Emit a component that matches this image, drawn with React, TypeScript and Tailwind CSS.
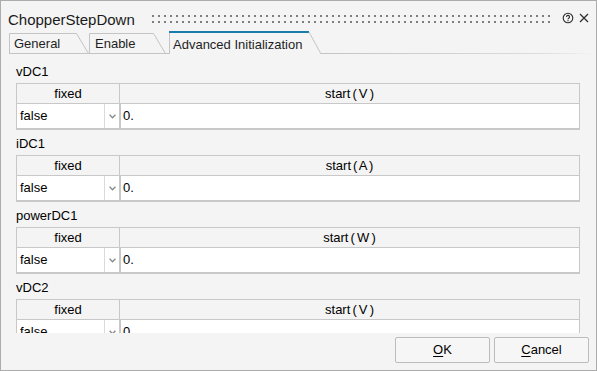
import React from "react";

const rows = [
  { name: "vDC1", unit: "V" },
  { name: "iDC1", unit: "A" },
  { name: "powerDC1", unit: "W" },
  { name: "vDC2", unit: "V" },
];

function InactiveTab({
  label,
  top,
  className,
}: {
  label: string;
  top: number;
  className: string;
}) {
  // top = x where the slanted edge starts, the slant is 12px wide
  return (
    <div className={"relative h-[23px] shrink-0 " + className}>
      <svg className="absolute inset-0" width="80" height="23">
        <path d={`M0.5 23 V2.5 H${top + 0.5} L${top + 12.5} 22.5`} stroke="#c4c4c4" fill="none" />
        <path d="M0 22.5 H80" stroke="#c4c4c4" />
      </svg>
      <div className="relative pt-[5px] text-[13px] leading-[16px] text-[#1e1e1e]">{label}</div>
    </div>
  );
}

function ParamTable({ unit }: { unit: string }) {
  return (
    <div className="mt-[2px] mb-[5px] w-[564px] border border-[#c8c8c8] text-[13px] text-black">
      <div className="flex h-[20px] border-b border-[#c8c8c8] leading-[19px]">
        <div className="w-[103px] border-r border-[#c8c8c8] text-center">fixed</div>
        <div className="flex-1 text-center [word-spacing:-1.5px]">start ( {unit} )</div>
      </div>
      <div className="flex h-[25px] border-b border-[#c8c8c8] leading-[24px]">
        <div className="flex w-[104px] border-r-2 border-[#c8c8c8] bg-white">
          <div className="flex-1 pl-[3px]">false</div>
          <div className="flex w-[15px] items-center justify-center border-l border-[#dadada]">
            <svg width="7" height="5" viewBox="0 0 7 5">
              <path d="M0.6 0.8 L3.5 3.8 L6.4 0.8" stroke="#8c8c8c" strokeWidth="1.4" fill="none" />
            </svg>
          </div>
        </div>
        <div className="flex-1 bg-white pl-[2px]">0.</div>
      </div>
    </div>
  );
}

export default function App() {
  return (
    <div
      className="flex h-[371px] w-[597px] flex-col overflow-hidden border border-[#acacac] bg-[#f4f4f4] text-black"
      style={{ fontFamily: '"Liberation Sans", Arial, sans-serif' }}
    >
      {/* title bar */}
      <div className="flex h-[30px] shrink-0 items-start pl-[7px] pt-[9px]">
        <span className="text-[15px] leading-[20px] text-[#1a1a1a]">ChopperStepDown</span>
        <div className="ml-[15px] mt-[3px] h-[12px] w-[404px] bg-[radial-gradient(circle,#7e7e7e_1.1px,transparent_1.5px)] bg-[length:6px_6px]" />
        <svg className="ml-[8px] mt-[2px]" width="12" height="12" viewBox="0 0 12 12">
          <circle cx="6" cy="6" r="4.8" stroke="#2a2a2a" strokeWidth="1.1" fill="none" />
          <path d="M4.5 4.9 a1.5 1.5 0 1 1 2.2 1.3 c-0.5 0.3 -0.7 0.6 -0.7 1.1" stroke="#2a2a2a" strokeWidth="1.1" fill="none" />
          <circle cx="6" cy="8.7" r="0.65" fill="#2a2a2a" />
        </svg>
        <svg className="ml-[5px] mt-[3px]" width="10" height="10" viewBox="0 0 10 10">
          <path d="M1 1 L9 9 M9 1 L1 9" stroke="#2a2a2a" strokeWidth="1.2" />
        </svg>
      </div>

      {/* tabs */}
      <div className="flex h-[23px] shrink-0 pl-[8px]">
        <InactiveTab label="General" top={67} className="w-[80px] pl-[5px]" />
        <InactiveTab label="Enable" top={64} className="w-[80px] pl-[6px]" />
        <div className="relative h-[23px] w-[152px] shrink-0 pl-[4px]">
          <svg className="absolute inset-0" width="152" height="23">
            <path d="M0.5 23 V1" stroke="#c4c4c4" fill="none" />
            <rect x="0" y="0" width="140" height="2" fill="#1a7cac" />
            <path d="M140 1 L152 23" stroke="#c4c4c4" fill="none" />
          </svg>
          <div className="relative pt-[6px] text-[13px] leading-[16px] text-[#1e1e1e]">Advanced Initialization</div>
        </div>
        <div className="flex flex-1 flex-col justify-end">
          <div className="h-px bg-[linear-gradient(90deg,#c4c4c4,#dcdcdc_80%,transparent)]" />
        </div>
      </div>

      {/* parameters */}
      <div className="h-[279px] shrink-0 overflow-hidden pl-[15px] pt-[9px]">
        {rows.map((r) => (
          <div key={r.name}>
            <div className="text-[13px] leading-[18px]">{r.name}</div>
            <ParamTable unit={r.unit} />
          </div>
        ))}
      </div>

      {/* buttons */}
      <div className="flex justify-end gap-[4px] pr-[7px] pt-[4px]">
        <button className="h-[26px] w-[95px] rounded-[2px] border border-[#bcbcbc] bg-[#f6f6f6] text-[13px]">
          <span className="underline underline-offset-2">O</span>K
        </button>
        <button className="h-[26px] w-[95px] rounded-[2px] border border-[#bcbcbc] bg-[#f6f6f6] text-[13px]">
          <span className="underline underline-offset-2">C</span>ancel
        </button>
      </div>
    </div>
  );
}
